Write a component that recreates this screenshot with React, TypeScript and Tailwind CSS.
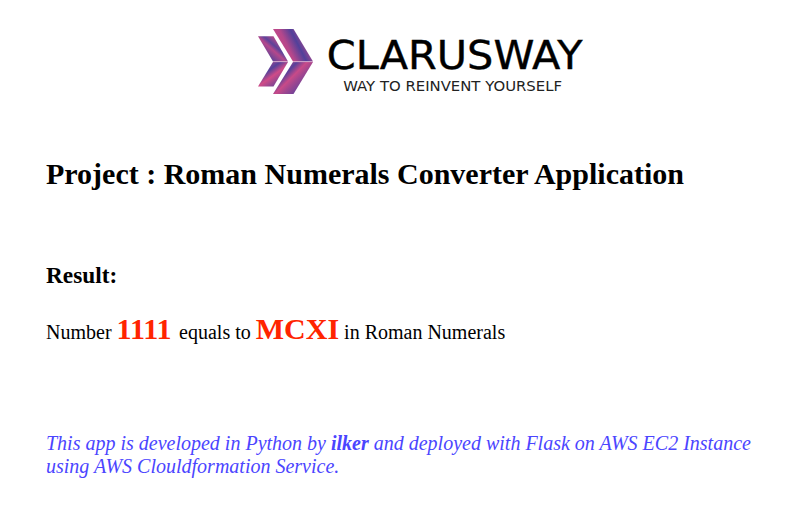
export default function App() {
  return (
    <main className="h-[514px] w-[802px] overflow-hidden bg-white pl-[46px] font-['Liberation_Serif',serif] text-black">
      <header className="-ml-[46px] flex h-[94px] pt-[28px] pl-[258px]">
        <svg className="mt-px shrink-0" width="56" height="66" viewBox="0 0 56 66" aria-hidden="true">
          <defs>
            <linearGradient id="outerTop" gradientUnits="userSpaceOnUse" x1="18" y1="22" x2="46" y2="8">
              <stop offset="0" stopColor="#d04b87" />
              <stop offset="0.4" stopColor="#b5478b" />
              <stop offset="0.72" stopColor="#51409a" />
              <stop offset="1" stopColor="#a9488e" />
            </linearGradient>
            <linearGradient id="outerBottom" gradientUnits="userSpaceOnUse" x1="20" y1="40" x2="42" y2="62">
              <stop offset="0.1" stopColor="#a4478e" />
              <stop offset="0.28" stopColor="#57419a" />
              <stop offset="0.5" stopColor="#c84a88" />
              <stop offset="0.68" stopColor="#a0468f" />
              <stop offset="1" stopColor="#64429a" />
            </linearGradient>
            <linearGradient id="innerTop" gradientUnits="userSpaceOnUse" x1="6" y1="26" x2="20" y2="10">
              <stop offset="0" stopColor="#54429a" />
              <stop offset="0.45" stopColor="#b4488b" />
              <stop offset="0.65" stopColor="#5d439a" />
              <stop offset="1" stopColor="#c24b88" />
            </linearGradient>
            <linearGradient id="innerBottom" gradientUnits="userSpaceOnUse" x1="7" y1="36" x2="20" y2="54">
              <stop offset="0" stopColor="#9c4690" />
              <stop offset="0.3" stopColor="#55419a" />
              <stop offset="0.6" stopColor="#d04b87" />
              <stop offset="1" stopColor="#7c4494" />
            </linearGradient>
          </defs>
          <path d="M0 7.3H15.5L30 32.5H15Z" fill="url(#innerTop)" />
          <path d="M0 57.5H15.5L30 33H15Z" fill="url(#innerBottom)" />
          <path d="M15 0H35.5L55 32.5H35Z" fill="url(#outerTop)" />
          <path d="M15 65H35.5L55 33H35Z" fill="url(#outerBottom)" />
          <path d="M15 32.7H30M35 32.7H55" stroke="#d9a0c6" strokeWidth="0.7" />
        </svg>
        <div className="flex origin-left scale-x-[1.062] flex-col pt-[8px] pl-[12px] font-['DejaVu_Sans',sans-serif] whitespace-nowrap">
          <span className="text-[39px] leading-[40px] [-webkit-text-stroke:0.4px_black]">CLARUSWAY</span>
          <span className="mt-[2px] pl-[15.5px] text-[14px] leading-[17px] text-[#222]">WAY TO REINVENT YOURSELF</span>
        </div>
      </header>
      <h1 className="mt-[62px] text-[30px] leading-[36px] font-bold whitespace-nowrap">Project : Roman Numerals Converter Application</h1>
      <h2 className="mt-[70px] text-[23.3px] leading-[26px] font-bold">Result:</h2>
      <p className="mt-[23px] text-[20px] leading-[36px] whitespace-pre">Number <b className="text-[30px] text-[#ff2400]">1111</b><span className="ml-[-2.5px]">  equals to </span><b className="text-[30px] text-[#ff2400]">MCXI</b> in Roman Numerals</p>
      <p className="mt-[82px] text-[20px] leading-[23px] text-[#4b45ff] italic">This app is developed in Python by <b>ilker</b> and deployed with Flask on AWS EC2 Instance<br />using AWS Clouldformation Service.</p>
    </main>
  );
}
